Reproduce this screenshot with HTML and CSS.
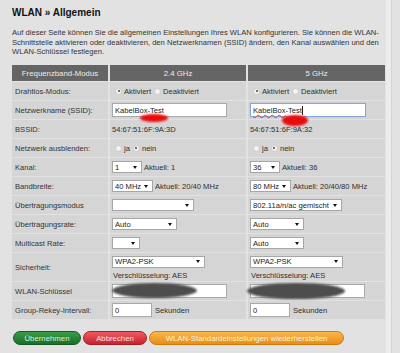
FILE: index.html
```html
<!DOCTYPE html>
<html lang="de">
<head>
<meta charset="utf-8">
<title>WLAN » Allgemein</title>
<link rel="stylesheet" href="styles.css">
</head>
<body>
<div class="page">
  <main class="content">
    <h1 class="title">WLAN » Allgemein</h1>
    <p class="intro">Auf dieser Seite können Sie die allgemeinen Einstellungen Ihres WLAN konfigurieren. Sie können die WLAN-<br>Schnittstelle aktivieren oder deaktivieren, den Netzwerknamen (SSID) ändern, den Kanal auswählen und den<br>WLAN-Schlüssel festlegen.</p>

    <div class="grid">
      <div class="c hd">Frequenzband-Modus</div>
      <div class="c hd">2.4 GHz</div>
      <div class="c hd">5 GHz</div>

      <div class="c lb">Drahtlos-Modus:</div>
      <div class="c v"><span class="radio on"></span>Aktiviert <span class="radio"></span>Deaktiviert</div>
      <div class="c v"><span class="radio on"></span>Aktiviert <span class="radio"></span>Deaktiviert</div>

      <div class="c lb">Netzwerkname (SSID):</div>
      <div class="c v"><span class="inp">KabelBox-Test</span><span class="blob red b1"></span></div>
      <div class="c v"><span class="inp focus"><span class="spell">KabelBox</span>-Test<span class="caret"></span></span><span class="blob red b2"></span></div>

      <div class="c lb">BSSID:</div>
      <div class="c v">54:67:51:6F:9A:3D</div>
      <div class="c v">54:67:51:6F:9A:32</div>

      <div class="c lb">Netzwerk ausblenden:</div>
      <div class="c v"><span class="radio"></span>ja <span class="radio on"></span>nein</div>
      <div class="c v"><span class="radio"></span>ja <span class="radio on"></span>nein</div>

      <div class="c lb">Kanal:</div>
      <div class="c v"><span class="sel w30">1</span>Aktuell: 1</div>
      <div class="c v"><span class="sel w30">36</span>Aktuell: 36</div>

      <div class="c lb">Bandbreite:</div>
      <div class="c v"><span class="sel w41">40 MHz</span>Aktuell: 20/40 MHz</div>
      <div class="c v"><span class="sel w41">80 MHz</span>Aktuell: 20/40/80 MHz</div>

      <div class="c lb">Übertragungsmodus</div>
      <div class="c v"><span class="sel w82"></span></div>
      <div class="c v"><span class="sel w92">802.11a/n/ac gemischt</span></div>

      <div class="c lb">Übertragungsrate:</div>
      <div class="c v"><span class="sel w65">Auto</span></div>
      <div class="c v"><span class="sel w54">Auto</span></div>

      <div class="c lb">Multicast Rate:</div>
      <div class="c v"><span class="sel w28"></span></div>
      <div class="c v"><span class="sel w54">Auto</span></div>

      <div class="c lb tall">Sicherheit:</div>
      <div class="c v tall stack"><span class="sel w93">WPA2-PSK</span><span class="note">Verschlüsselung: AES</span></div>
      <div class="c v tall stack"><span class="sel w93">WPA2-PSK</span><span class="note">Verschlüsselung: AES</span></div>

      <div class="c lb">WLAN-Schlüssel</div>
      <div class="c v"><span class="inp"></span><span class="blob gray g1"></span></div>
      <div class="c v"><span class="inp"></span><span class="blob gray g2"></span></div>

      <div class="c lb">Group-Rekey-Intervall:</div>
      <div class="c v"><span class="inp short">0</span>Sekunden</div>
      <div class="c v"><span class="inp short">0</span>Sekunden</div>
    </div>

    <div class="buttons">
      <span class="btn green">Übernehmen</span>
      <span class="btn redbtn">Abbrechen</span>
      <span class="btn orange">WLAN-Standardeinstellungen wiederherstellen</span>
    </div>
  </main>
  <div class="edge"></div>
</div>
</body>
</html>
```

FILE: styles.css
```css
* { box-sizing: border-box; }
html, body { margin: 0; }
body {
  background: #e2e2e2;
  font-family: "Liberation Sans", Arial, sans-serif;
  font-size: 7.6px;
  color: #2e2e2e;
}
.page { display: flex; min-height: 353px; }
.content { width: 386px; padding: 8px 0 0 12px; }
.edge { width: 6px; background: #ececec; border-right: 1px solid #d4d4d4; }

.title { margin: 0; font-size: 10px; font-weight: bold; line-height: 10px; color: #111; }
.intro { margin: 10px 0 0; line-height: 9.5px; color: #333; }

.grid {
  margin-top: 8.5px;
  display: grid;
  grid-template-columns: 96px 136px 137px;
  column-gap: 2px;
  row-gap: 1px;
}
.c {
  position: relative;
  background: #d5d5d5;
  display: flex;
  align-items: center;
  min-height: 18px;
  padding: 0 2px;
  white-space: nowrap;
}
.hd { background: #656565; color: #ececec; justify-content: center; min-height: 16px; font-size: 7.8px; }
.lb { padding-left: 3px; color: #333; }
.tall { min-height: 28px; }
.stack { flex-direction: column; align-items: flex-start; justify-content: center; gap: 3px; padding-top: 1px; }
.note { padding-left: 1px; }

.radio {
  position: relative;
  width: 7px; height: 7px;
  border-radius: 50%;
  background: #f3f3f3;
  border: 1px solid #cbcbcb;
  margin: 0 2px 0 3px;
}
.radio.on::after {
  content: "";
  position: absolute;
  left: 1.5px; top: 1.5px;
  width: 2px; height: 2px;
  border-radius: 50%;
  background: #444;
}

.inp {
  display: flex; align-items: center;
  width: 115px; height: 14px;
  background: #fff;
  border: 1px solid #a9a9a9;
  padding-left: 2px;
  color: #222;
}
.inp.focus { width: 116px; border-color: #8aa4d6; box-shadow: 0 0 1px #9fb6e6; }
.inp.short { width: 40px; margin-right: 3px; }
.spell { text-decoration: underline wavy #d44; text-decoration-thickness: 0.5px; }
.caret { width: 1px; height: 9px; background: #222; }

.sel {
  position: relative;
  display: flex; align-items: center;
  height: 12px;
  background: #fff;
  border: 1px solid #a6a6a6;
  padding-left: 2px;
  margin-right: 2px;
  color: #222;
}
.sel::after {
  content: "";
  position: absolute;
  right: 4px; top: 3.5px;
  border-left: 2px solid transparent;
  border-right: 2px solid transparent;
  border-top: 3px solid #111;
}
.w28 { width: 28px; }
.w30 { width: 30px; }
.w41 { width: 41px; }
.w54 { width: 54px; }
.w65 { width: 65px; }
.w82 { width: 82px; }
.w92 { width: 92px; }
.w93 { width: 93px; }

.blob { position: absolute; border-radius: 50%; z-index: 2; }
.red { background: #e80c0c; filter: blur(0.8px); }
.b1 { left: 30px; top: 13px; width: 28px; height: 8px; }
.b2 { left: 34px; top: 14px; width: 26px; height: 11px; }
.gray { background: #4d4d4d; filter: blur(1.2px); }
.g1 { left: 2px; top: 1px; width: 85px; height: 15px; }
.g2 { left: -1px; top: 1px; width: 98px; height: 16px; }

.buttons { display: flex; gap: 2px; margin-top: 12px; padding-left: 1px; }
.btn {
  display: flex; align-items: center; justify-content: center;
  height: 14px;
  border-radius: 7px;
  font-size: 7.8px;
}
.green {
  width: 68px;
  background: linear-gradient(#3a9c45, #1c6e28);
  border: 1px solid #175a20;
  color: #d8f2d8;
}
.redbtn {
  width: 64px;
  background: linear-gradient(#ef5a62, #c8232e);
  border: 1px solid #a81c25;
  color: #fde0e0;
}
.orange {
  width: 195px;
  background: linear-gradient(#f8b74a, #ea8d16);
  border: 1px solid #d27a0e;
  color: #fff4dc;
}
```
